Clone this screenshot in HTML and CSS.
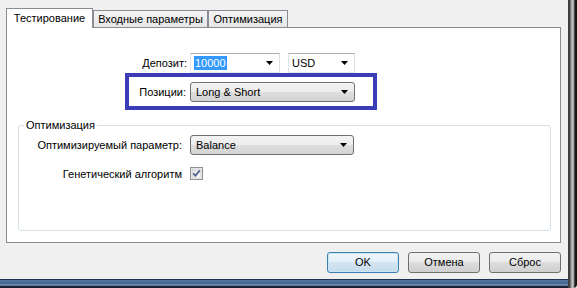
FILE: index.html
```html
<!DOCTYPE html>
<html lang="ru">
<head>
    <meta charset="UTF-8">
    <title>Тестирование</title>
    <link rel="stylesheet" href="styles.css">
</head>
<body>
    <div class="window-col">
        <div class="client">
            <div class="tabs">
                <div class="tab active tab-test">Тестирование</div>
                <div class="tab tab-inputs">Входные параметры</div>
                <div class="tab tab-opt">Оптимизация</div>
            </div>
            <div class="panel">
                <div class="row">
                    <span class="label">Депозит:</span>
                    <div class="combo combo-deposit">
                        <span class="selected">10000</span>
                        <span class="arrow"></span>
                    </div>
                    <div class="combo combo-currency">
                        <span>USD</span>
                        <span class="arrow"></span>
                    </div>
                </div>
                <div class="highlight">
                    <div class="row">
                        <span class="label label-short">Позиции:</span>
                        <div class="droplist">
                            <span>Long &amp; Short</span>
                            <span class="arrow"></span>
                        </div>
                    </div>
                </div>
                <fieldset class="group">
                    <legend>Оптимизация</legend>
                    <div class="row">
                        <span class="label label-group">Оптимизируемый параметр:</span>
                        <div class="droplist droplist-param">
                            <span>Balance</span>
                            <span class="arrow"></span>
                        </div>
                    </div>
                    <div class="row row-check">
                        <span class="label label-group">Генетический алгоритм</span>
                        <svg class="checkbox" width="13" height="13" viewBox="0 0 13 13">
                            <defs>
                                <linearGradient id="cb" x1="0" y1="0" x2="1" y2="1">
                                    <stop offset="0" stop-color="#dcdcdc"/>
                                    <stop offset="1" stop-color="#fbfbfb"/>
                                </linearGradient>
                            </defs>
                            <rect x="0.5" y="0.5" width="12" height="12" fill="#f4f4f4" stroke="#8e8f8f"/>
                            <rect x="2" y="2" width="9" height="9" fill="url(#cb)" stroke="#c6c6c6" stroke-width="0.6"/>
                            <path d="M3.2 6.4 L5.4 8.8 L9.8 3.4" fill="none" stroke="#4a5f8e" stroke-width="1.7"/>
                        </svg>
                    </div>
                </fieldset>
            </div>
            <div class="buttons">
                <div class="btn btn-default">OK</div>
                <div class="btn">Отмена</div>
                <div class="btn">Сброс</div>
            </div>
        </div>
        <div class="frame-bottom"></div>
    </div>
    <div class="frame-right"></div>
</body>
</html>
```

FILE: styles.css
```css
html, body {
    margin: 0;
    padding: 0;
}
body {
    font-family: "Liberation Sans", Arial, sans-serif;
    font-size: 11px;
    color: #000;
    background-color: #f0f0f0;
    width: 577px;
    height: 288px;
    overflow: hidden;
    display: flex;
}
.window-col {
    flex: 1;
    display: flex;
    flex-direction: column;
}
.client {
    flex: 1;
    display: flex;
    flex-direction: column;
    padding: 0 7px 0 6px;
}
.frame-bottom {
    height: 9px;
    background: linear-gradient(#1d3553 0, #1d3553 1px, #5678a2 1px, #3f6590 5px, #9fb4cc 6px, #24364f 7px, #101a28 9px);
}
.frame-right {
    width: 9px;
    background: linear-gradient(to right, #3a3a3a 0, #4a4a4a 2px, #9a9a9a 3px, #cfcfcf 5px, #7a7a7a 6px, #1c1c1c 7px, #111 9px);
    border-bottom-right-radius: 4px;
}

/* tabs */
.tabs {
    display: flex;
    align-items: flex-end;
    padding-top: 8px;
}
.tab {
    height: 17px;
    box-sizing: border-box;
    border: 1px solid #898c95;
    border-bottom: none;
    background: linear-gradient(#f4f4f4, #e6e6e6);
    line-height: 16px;
    text-align: center;
}
.tab.active {
    height: 20px;
    line-height: 19px;
    background: #fff;
    margin-bottom: -1px;
    position: relative;
    z-index: 1;
}
.tab-test {
    width: 87px;
}
.tab-inputs {
    width: 115px;
}
.tab-opt {
    width: 80px;
}

/* panel */
.panel {
    height: 216px;
    box-sizing: border-box;
    border: 1px solid #898c95;
    background-color: #fff;
    padding-top: 25px;
    display: flex;
    flex-direction: column;
}
.row {
    display: flex;
    align-items: center;
    height: 20px;
}
.label {
    width: 180px;
    margin-right: 3px;
    text-align: right;
    white-space: nowrap;
}
.label-short {
    width: 57px;
    margin-right: 4px;
}
.label-group {
    width: 158px;
    margin-right: 8px;
}
.combo, .droplist {
    height: 20px;
    box-sizing: border-box;
    display: flex;
    align-items: center;
    justify-content: space-between;
    padding: 0 6px 0 3px;
}
.combo {
    background-color: #fff;
    border: 1px solid;
    border-color: #abadb3 #dbdfe6 #e3e9ef #e2e3ea;
}
.combo-deposit {
    width: 90px;
    margin-right: 8px;
}
.combo-currency {
    width: 67px;
}
.selected {
    background-color: #3399ff;
    color: #fff;
    line-height: 14px;
    padding: 0 1px;
}
.droplist {
    width: 165px;
    border: 1px solid #707070;
    border-radius: 3px;
    background: linear-gradient(#f3f3f3 0%, #ececec 50%, #dedede 50%, #d3d3d3 100%);
    padding-left: 5px;
}
.droplist-param {
    width: 164px;
}
.arrow {
    width: 7px;
    height: 4px;
    background-color: #000;
    clip-path: polygon(0 0, 100% 0, 50% 100%);
}
.highlight {
    width: 252px;
    box-sizing: border-box;
    margin-left: 118px;
    border: 4px solid #3b3db6;
    padding: 5px 0 4px;
}

/* group */
.group {
    flex: 1;
    margin: 8px 9px 11px 11px;
    padding: 3px 0 0 5px;
    border: 1px solid #d5dfe5;
    border-radius: 3px;
    min-width: 0;
}
.group legend {
    padding: 0 2px;
    line-height: 14px;
}
.row-check {
    height: 13px;
    margin-top: 12px;
}
.checkbox {
    display: block;
}

/* buttons */
.buttons {
    display: flex;
    justify-content: flex-end;
    gap: 9px;
    margin-top: 9px;
}
.btn {
    width: 72px;
    height: 21px;
    box-sizing: border-box;
    border: 1px solid #707070;
    border-radius: 3px;
    background: linear-gradient(#f2f2f2 0%, #ebebeb 50%, #dddddd 50%, #cfcfcf 100%);
    text-align: center;
    line-height: 19px;
}
.btn-default {
    border-color: #3c7fb1;
    background: linear-gradient(#f0f7fc 0%, #e3eff8 50%, #d3e4f1 50%, #c6dbeb 100%);
    box-shadow: inset 0 0 0 1px #c7e6f8;
}
```
